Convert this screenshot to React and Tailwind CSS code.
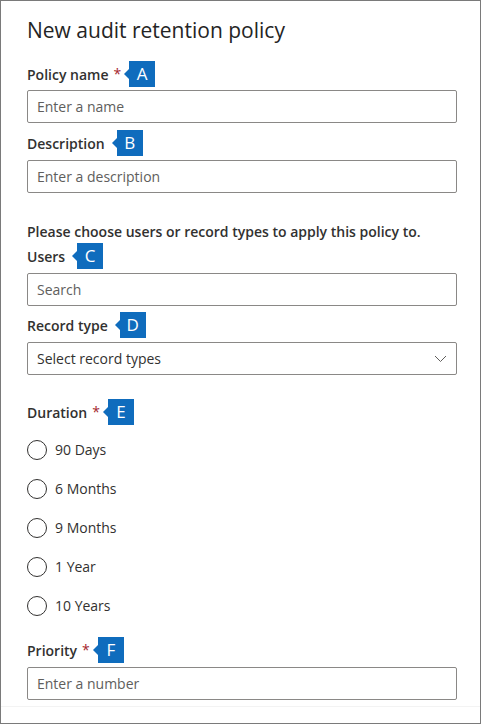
import { useState } from "react";

const font = { fontFamily: '"Open Sans", "Noto Sans", sans-serif' };

function Badge({ letter }) {
  return (
    <span className="flex items-center">
      <span className="w-0 h-0 border-y-[5px] border-y-transparent border-r-[5px] border-r-[#0f6cbd]" />
      <span className="w-[26px] h-[26px] bg-[#0f6cbd] text-white text-[17px] flex items-center justify-center">
        {letter}
      </span>
    </span>
  );
}

function Label({ text, required, letter, className = "" }) {
  return (
    <div className={`flex items-center h-[26px] ${className}`}>
      <span className="text-[14px] font-semibold text-[#323130]">{text}</span>
      {required && <span className="ml-[5px] text-[14px] text-[#a4262c] leading-none">*</span>}
      <span className={required ? "ml-[3px]" : "ml-[7px]"}>
        <Badge letter={letter} />
      </span>
    </div>
  );
}

function TextInput({ placeholder, className = "" }) {
  return (
    <input
      placeholder={placeholder}
      className={`block w-full h-[33px] px-[9px] border border-[#8a8886] rounded-[2px] text-[14px] text-[#323130] placeholder:text-[#605e5c] outline-none ${className}`}
      style={font}
    />
  );
}

export default function App() {
  const [duration, setDuration] = useState(null);
  const durations = ["90 Days", "6 Months", "9 Months", "1 Year", "10 Years"];

  return (
    <div className="w-[481px] h-[725px] bg-white" style={font}>
      <div className="w-[481px] h-[724px] border border-[#7a7a7a] flex flex-col pl-[26px] pr-[23px] pt-[15px]">
        <h1 className="text-[21px] leading-[28px] text-[#242424]">New audit retention policy</h1>

        <Label text="Policy name" required letter="A" className="mt-[17px]" />
        <TextInput placeholder="Enter a name" className="mt-[3px]" />

        <Label text="Description" letter="B" className="mt-[7px]" />
        <TextInput placeholder="Enter a description" className="mt-[4px]" />

        <p className="mt-[29px] h-[20px] leading-[20px] text-[14px] font-semibold text-[#323130]">
          Please choose users or record types to apply this policy to.
        </p>

        <Label text="Users" letter="C" className="mt-[1px]" />
        <TextInput placeholder="Search" className="mt-[4px]" />

        <Label text="Record type" letter="D" className="mt-[6px]" />
        <div className="mt-[4px] h-[33px] px-[9px] border border-[#8a8886] rounded-[2px] flex items-center justify-between">
          <span className="text-[14px] text-[#323130]">Select record types</span>
          <svg width="13" height="8" viewBox="0 0 13 8" fill="none">
            <path d="M1 1l5.5 5.5L12 1" stroke="#605e5c" strokeWidth="1" />
          </svg>
        </div>

        <Label text="Duration" required letter="E" className="mt-[24px]" />
        <div className="mt-[5px] flex flex-col">
          {durations.map((d) => (
            <label key={d} className="h-[39px] flex items-center cursor-pointer" onClick={() => setDuration(d)}>
              <span className="w-[20px] h-[20px] rounded-full border border-[#323130] flex items-center justify-center">
                {duration === d && <span className="w-[10px] h-[10px] rounded-full bg-[#323130]" />}
              </span>
              <span className="ml-[8px] text-[14px] text-[#323130]">{d}</span>
            </label>
          ))}
        </div>

        <Label text="Priority" required letter="F" className="mt-[12px]" />
        <TextInput placeholder="Enter a number" className="mt-[4px]" />

        <div className="mt-[6px] -ml-[26px] -mr-[23px] border-t border-[#f3f3f3]" />
      </div>
    </div>
  );
}
